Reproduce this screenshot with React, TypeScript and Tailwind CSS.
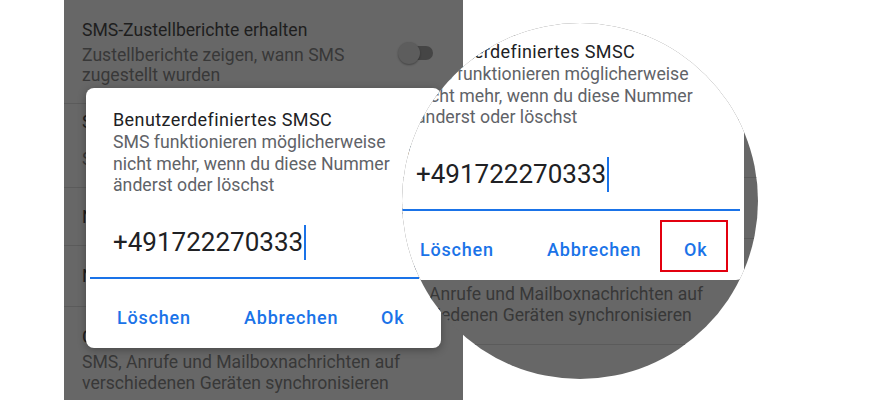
import React from "react";

function Divider() {
  return <div className="h-px w-full bg-[#5b5b5b]" />;
}

function PhoneList() {
  return (
    <div className="flex h-[460px] w-[399px] flex-col bg-[#676767] text-[17.6px]">
      <div className="flex h-[103px] items-center justify-between pl-[18px] pr-[30px]">
        <div className="flex flex-col">
          <div className="leading-[22px] text-[#1e1e1e]">SMS-Zustellberichte erhalten</div>
          <div className="mt-[4px] leading-[20px] text-[#383838]">
            Zustellberichte zeigen, wann SMS
            <br />
            zugestellt wurden
          </div>
        </div>
        <div className="relative mt-[2px] h-[22px] w-[35px] shrink-0">
          <div className="absolute right-0 top-[4px] h-[14px] w-[30px] rounded-full bg-[#454545]" />
          <div className="absolute left-0 top-0 h-[22px] w-[22px] rounded-full bg-[#5d5d5d] shadow-[0_1px_2px_rgba(0,0,0,0.35)]" />
        </div>
      </div>
      <Divider />
      <div className="flex h-[83px] flex-col pl-[18px] pt-[8px]">
        <div className="leading-[20px] text-[#1e1e1e]">SMSC-Nummer</div>
        <div className="mt-[17px] leading-[20px] text-[#383838]">Standard</div>
      </div>
      <Divider />
      <div className="flex h-[57px] items-center pl-[18px] leading-[20px] text-[#1e1e1e]">
        Nummer des Mobiltelefons
      </div>
      <Divider />
      <div className="flex h-[60px] items-center pl-[18px] leading-[20px] text-[#1e1e1e]">
        Nachrichtenzentrale
      </div>
      <Divider />
      <div className="flex h-[105px] flex-col pl-[18px] pt-[19px]">
        <div className="leading-[22px] text-[#1e1e1e]">Google Fi-Einstellungen</div>
        <div className="mt-[3.5px] whitespace-nowrap leading-[21px] text-[#383838]">
          SMS, Anrufe und Mailboxnachrichten auf
          <br />
          verschiedenen Geräten synchronisieren
        </div>
      </div>
      <Divider />
    </div>
  );
}

function Dialog({ wide, redBox, front }: { wide?: boolean; redBox?: boolean; front?: boolean }) {
  return (
    <div
      className={
        "absolute left-[22px] top-[88px] flex h-[260px] w-[355px] flex-col rounded-[8px] bg-white " +
        (front ? "z-10 shadow-[0_2px_8px_rgba(0,0,0,0.3)]" : "")
      }
    >
      <div className="pl-[27px] pt-[21px]">
        <div className="whitespace-nowrap text-[18px] leading-[22px] tracking-[0.4px] text-[#202124]">
          Benutzerdefiniertes SMSC
        </div>
        <div className="mt-[1px] whitespace-nowrap text-[17.7px] leading-[21.5px] text-[#5f6368]">
          SMS funktionieren möglicherweise
          <br />
          nicht mehr, wenn du diese Nummer
          <br />
          änderst oder löschst
        </div>
      </div>
      <div className="mt-[27.5px] flex h-[36px] items-center pl-[27px]">
        <span className="text-[26px] leading-[36px] text-[#202124]">+491722270333</span>
        <span className="ml-[1px] h-[35px] w-[2px] bg-[#1a73e8]" />
      </div>
      <div className={"ml-[4px] mt-[17px] h-[2px] bg-[#1a73e8] " + (wide ? "w-[347px]" : "w-[329px]")} />
      <div className="relative mt-[27px] flex h-[24px] items-center whitespace-nowrap text-[18px] font-medium tracking-[0.8px] text-[#1a73e8]">
        <span className="ml-[31px] w-[127px] leading-[24px]">Löschen</span>
        <span className="w-[137px] leading-[24px]">Abbrechen</span>
        <span className="leading-[24px]">Ok</span>
        {redBox && (
          <div className="absolute left-[271px] top-[-18px] h-[52px] w-[68px] border-2 border-[#e3000f]" />
        )}
      </div>
    </div>
  );
}

export default function App() {
  return (
    <div className="relative h-[400px] w-[879px] overflow-hidden bg-white font-[Roboto,'Noto_Sans',sans-serif]">
      <div className="flex h-full">
        <div className="relative ml-[64px] h-[400px] w-[399px] overflow-hidden">
          <PhoneList />
          <Dialog front />
        </div>
      </div>
      <div className="absolute left-[402px] top-[23px] z-20 h-[356px] w-[356px] overflow-hidden rounded-full">
        <div className="absolute left-[-35px] top-[-91px] h-[460px] w-[399px]">
          <PhoneList />
          <Dialog wide redBox />
        </div>
      </div>
    </div>
  );
}
